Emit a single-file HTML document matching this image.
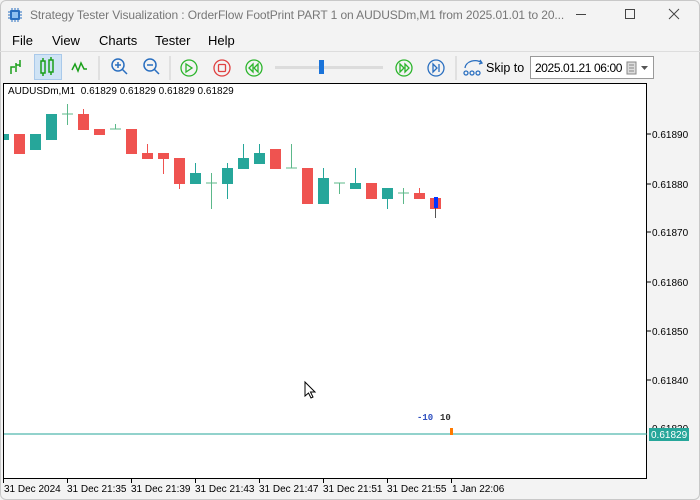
<!DOCTYPE html>
<html><head><meta charset="utf-8"><style>
*{margin:0;padding:0;box-sizing:border-box}
body{width:700px;height:500px;background:#f3f3f3;font-family:"Liberation Sans",sans-serif;position:relative;overflow:hidden}
.a{position:absolute;white-space:nowrap}
</style></head><body>
<div class="a" style="left:0;top:0;width:700px;height:500px;border:1px solid #c8c8c8;border-radius:6px;background:#f3f3f3"></div>
<svg class="a" style="left:8px;top:8px" width="14" height="14" viewBox="0 0 14 14"><rect x="2" y="2" width="10" height="10" rx="1" fill="#2a6fc0"/><rect x="4" y="4" width="6" height="6" fill="#8fc0f0"/><g stroke="#2a6fc0" stroke-width="1"><path d="M4 0v2M7 0v2M10 0v2M4 12v2M7 12v2M10 12v2M0 4h2M0 7h2M0 10h2M12 4h2M12 7h2M12 10h2"/></g></svg>
<div class="a" style="left:30px;top:8px;font-size:12px;letter-spacing:-0.1px;color:#777">Strategy Tester Visualization : OrderFlow FootPrint PART 1 on AUDUSDm,M1 from 2025.01.01 to 20...</div>
<div class="a" style="left:576px;top:14px;width:10px;height:1px;background:#444"></div>
<div class="a" style="left:625px;top:9px;width:10px;height:10px;border:1px solid #444"></div>
<svg class="a" style="left:668px;top:8px" width="12" height="12"><path d="M1 1L11 11M11 1L1 11" stroke="#444"/></svg>
<div class="a" style="left:12px;top:33px;font-size:13px;color:#000">File</div>
<div class="a" style="left:52px;top:33px;font-size:13px">View</div>
<div class="a" style="left:99px;top:33px;font-size:13px">Charts</div>
<div class="a" style="left:155px;top:33px;font-size:13px">Tester</div>
<div class="a" style="left:208px;top:33px;font-size:13px">Help</div>
<div class="a" style="left:0;top:51px;width:700px;height:1px;background:#ddd"></div>
<div class="a" style="left:34px;top:54px;width:28px;height:26px;background:#cfe3f5;border:1px solid #a9c9ea"></div>
<svg class="a" style="left:0;top:52px" width="700" height="32">
<g stroke="#1aa01a" stroke-width="1.5" fill="none">
<path d="M11 22v-7h4M16 20v-9M16 13h4M20 15v-7"/>
<rect x="41" y="9" width="4" height="12"/><path d="M43 6v3M43 21v3"/><rect x="49" y="8" width="4" height="12"/><path d="M51 5v3M51 20v3"/>
<path d="M72 18l3-6 3 7 3-8 3 6h3"/>
</g>
<line x1="99" y1="4" x2="99" y2="28" stroke="#ccc"/>
<g stroke="#2a6fc0" stroke-width="1.5" fill="none"><circle cx="118" cy="13" r="6"/><path d="M122 17l5 5M115 13h6M118 10v6"/><circle cx="150" cy="13" r="6"/><path d="M154 17l5 5M147 13h6"/></g>
<line x1="170" y1="4" x2="170" y2="28" stroke="#ccc"/>
<g fill="none" stroke-width="1.3"><circle cx="189" cy="16" r="8" stroke="#2cb52c"/><path d="M186 12v8l6-4z" stroke="#2cb52c"/>
<circle cx="222" cy="16" r="8" stroke="#e04040"/><rect x="218.5" y="12.5" width="7" height="7" rx="1" stroke="#e04040"/>
<circle cx="254" cy="16" r="8" stroke="#2cb52c"/><path d="M253 12l-4 4 4 4zM258 12l-4 4 4 4z" stroke="#2cb52c"/>
<circle cx="404" cy="16" r="8" stroke="#2cb52c"/><path d="M400 12l4 4-4 4zM405 12l4 4-4 4z" stroke="#2cb52c"/>
<circle cx="436" cy="16" r="8" stroke="#2a6fc0"/><path d="M433 12l4 4-4 4z M439 12v8" stroke="#2a6fc0"/></g>
<rect x="275" y="14" width="108" height="3" fill="#dcdcdc"/><rect x="319" y="8" width="5" height="14" fill="#1a73d9"/>
<line x1="456" y1="4" x2="456" y2="28" stroke="#ccc"/>
<g stroke="#2a6fc0" stroke-width="1.3" fill="none"><path d="M465 16a10 8 0 0 1 17-5M480 8l2 3-3 1"/><circle cx="466" cy="21" r="2"/><circle cx="472" cy="21" r="2"/><circle cx="478" cy="21" r="2"/></g>
</svg>
<div class="a" style="left:486px;top:61px;font-size:12.5px">Skip to</div>
<div class="a" style="left:530px;top:56px;width:124px;height:23px;background:#fff;border:1px solid #999"></div>
<div class="a" style="left:535px;top:61px;font-size:12px;letter-spacing:-0.4px">2025.01.21 06:00</div>
<svg class="a" style="left:626px;top:61px" width="26" height="14"><rect x="1" y="1" width="9" height="12" fill="#ddd" stroke="#888"/><path d="M3 4h5M3 7h5M3 10h5" stroke="#888"/><path d="M15 5h7l-3.5 4z" fill="#555"/></svg>
<div class="a" style="left:3px;top:83px;width:644px;height:396px;background:#fff;border:1px solid #000"></div>
<div class="a" style="left:8px;top:86px;font-size:10px">AUDUSDm,M1&nbsp; 0.61829 0.61829 0.61829 0.61829</div>
<svg class="a" style="left:0;top:0" width="700" height="500">
<g fill="#26a69a"><rect x="4" y="134" width="5" height="6"/><rect x="30" y="134" width="11" height="16"/><rect x="46" y="114" width="11" height="26"/><rect x="190" y="173" width="11" height="11"/><rect x="222" y="168" width="11" height="16"/><rect x="238" y="158" width="11" height="11"/><rect x="254" y="153" width="11" height="11"/><rect x="318" y="178" width="11" height="26"/><rect x="350" y="183" width="11" height="6"/><rect x="382" y="188" width="11" height="11"/></g>
<g fill="#ef5350"><rect x="14" y="134" width="11" height="20"/><rect x="78" y="114" width="11" height="16"/><rect x="94" y="129" width="11" height="6"/><rect x="126" y="129" width="11" height="25"/><rect x="142" y="153" width="11" height="6"/><rect x="158" y="153" width="11" height="6"/><rect x="174" y="158" width="11" height="26"/><rect x="270" y="149" width="11" height="20"/><rect x="302" y="168" width="11" height="36"/><rect x="366" y="183" width="11" height="16"/><rect x="414" y="193" width="11" height="6"/><rect x="430" y="198" width="11" height="11"/></g>
<g stroke="#26a69a" stroke-width="1"><path d="M195.5 163v10M227.5 163v36M243.5 144v14M259.5 144v9M323.5 168v10M355.5 168v15M387.5 199v10"/></g>
<g stroke="#ef5350"><path d="M83.5 109v5M147.5 144v9M163.5 159v15M179.5 184v5M419.5 188v5"/></g>
<g stroke="#5cb88a"><path d="M62 114h11M67.5 104v21M110 129h11M115.5 124v5M206 183h11M211.5 173v36M286 168h11M291.5 144v24M334 183h11M339.5 183v11M398 193h11M403.5 188v16"/></g>
<rect x="434" y="197" width="4" height="11" fill="#0033ff"/><path d="M435.5 208v10" stroke="#555"/>
<path d="M4 434h643" stroke="#26a69a"/><rect x="450" y="428" width="3" height="7" fill="#ff7a00"/>
<g stroke="#000"><path d="M647 134h4M647 184h4M647 232h4M647 282h4M647 331h4M647 380h4M3.5 479v4M67.5 479v4M131.5 479v4M195.5 479v4M259.5 479v4M323.5 479v4M387.5 479v4M451.5 479v4"/></g>
<g font-family="Liberation Mono,monospace" font-size="9" font-weight="bold"><text x="417" y="420" fill="#3050c0">-10</text><text x="440" y="420" fill="#333">10</text></g>
<g font-family="Liberation Sans,sans-serif" font-size="10" fill="#000"><text x="652" y="138">0.61890</text><text x="652" y="188">0.61880</text><text x="652" y="236">0.61870</text><text x="652" y="286">0.61860</text><text x="652" y="335">0.61850</text><text x="652" y="384">0.61840</text><text x="652" y="432">0.61830</text>
<text x="4" y="492">31 Dec 2024</text><text x="67" y="492">31 Dec 21:35</text><text x="131" y="492">31 Dec 21:39</text><text x="195" y="492">31 Dec 21:43</text><text x="259" y="492">31 Dec 21:47</text><text x="323" y="492">31 Dec 21:51</text><text x="387" y="492">31 Dec 21:55</text><text x="452" y="492">1 Jan 22:06</text></g>
<rect x="649" y="428" width="40" height="13" fill="#26a69a"/><text x="651" y="438" font-family="Liberation Sans,sans-serif" font-size="10" fill="#fff">0.61829</text>
<path d="M305 382v14l3.5-3 2.5 5 2-1-2.5-5h4.5z" fill="#fff" stroke="#000" stroke-width="1"/>
</svg>
</body></html>
